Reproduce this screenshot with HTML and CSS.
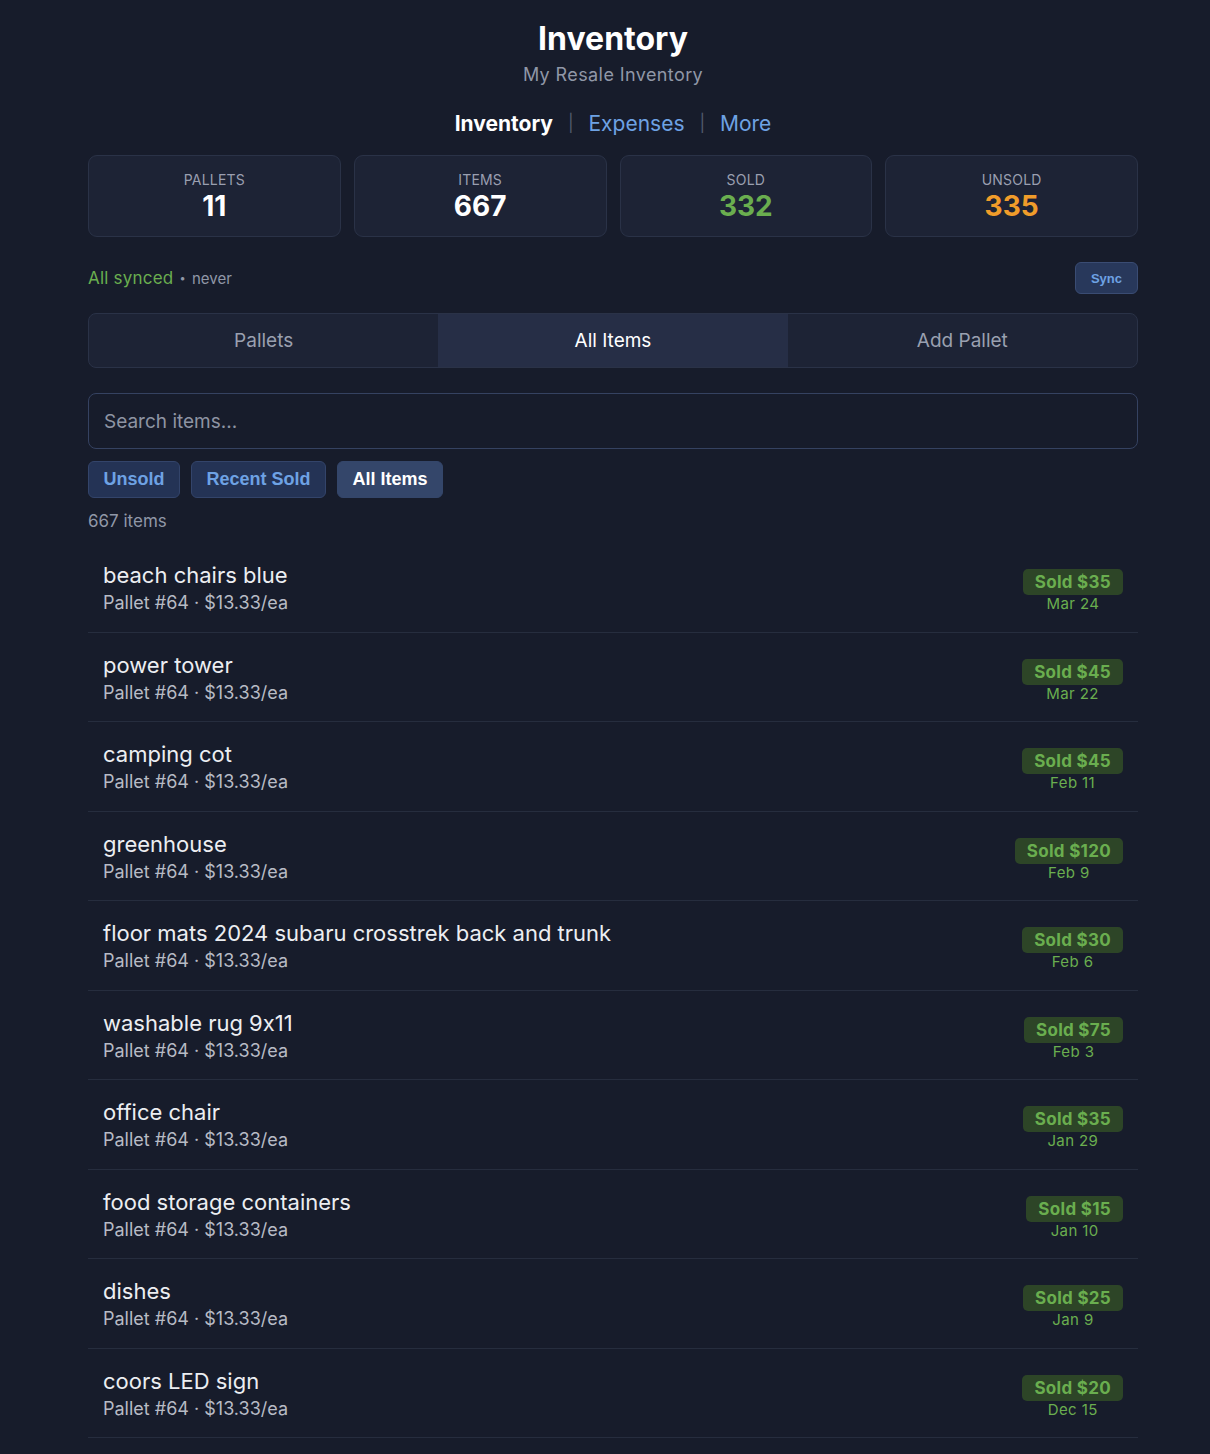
FILE: index.html
```html
<!DOCTYPE html>
<html lang="en">
<head>
    <meta charset="UTF-8">
    <meta name="viewport" content="width=device-width, initial-scale=1.0">
    <title>Inventory</title>
    <link rel="stylesheet" href="styles.css">
</head>
<body>
    <div class="app">
        <header class="header">
            <h1>Inventory</h1>
            <p class="subtitle">My Resale Inventory</p>
            <nav class="nav">
                <a class="active" href="#">Inventory</a>
                <span class="sep">|</span>
                <a href="#">Expenses</a>
                <span class="sep">|</span>
                <a href="#">More</a>
            </nav>
        </header>

        <section class="stats">
            <div class="stat">
                <div class="stat-label">Pallets</div>
                <div class="stat-value">11</div>
            </div>
            <div class="stat">
                <div class="stat-label">Items</div>
                <div class="stat-value">667</div>
            </div>
            <div class="stat">
                <div class="stat-label">Sold</div>
                <div class="stat-value sold">332</div>
            </div>
            <div class="stat">
                <div class="stat-label">Unsold</div>
                <div class="stat-value unsold">335</div>
            </div>
        </section>

        <div class="sync-row">
            <p class="sync-status"><span class="synced">All synced</span> <span class="dot">•</span> never</p>
            <button class="sync-btn">Sync</button>
        </div>

        <div class="tabs">
            <button class="tab">Pallets</button>
            <button class="tab active">All Items</button>
            <button class="tab">Add Pallet</button>
        </div>

        <input class="search" type="text" placeholder="Search items...">

        <div class="filters">
            <button class="chip">Unsold</button>
            <button class="chip">Recent Sold</button>
            <button class="chip active">All Items</button>
        </div>

        <p class="count" id="count">667 items</p>

        <div class="item-list" id="item-list"></div>
    </div>

    <script>
        const items = [
            { name: "beach chairs blue", price: 35, date: "Mar 24" },
            { name: "power tower", price: 45, date: "Mar 22" },
            { name: "camping cot", price: 45, date: "Feb 11" },
            { name: "greenhouse", price: 120, date: "Feb 9" },
            { name: "floor mats 2024 subaru crosstrek back and trunk", price: 30, date: "Feb 6" },
            { name: "washable rug 9x11", price: 75, date: "Feb 3" },
            { name: "office chair", price: 35, date: "Jan 29" },
            { name: "food storage containers", price: 15, date: "Jan 10" },
            { name: "dishes", price: 25, date: "Jan 9" },
            { name: "coors LED sign", price: 20, date: "Dec 15" },
        ];

        function renderItems() {
            const list = document.getElementById("item-list");
            list.innerHTML = "";
            items.forEach((item) => {
                const row = document.createElement("div");
                row.className = "item";
                row.innerHTML = `
                    <div class="item-info">
                        <div class="item-name">${item.name}</div>
                        <div class="item-meta">Pallet #64 · $13.33/ea</div>
                    </div>
                    <div class="item-status">
                        <span class="badge">Sold $${item.price}</span>
                        <span class="sold-date">${item.date}</span>
                    </div>
                `;
                list.appendChild(row);
            });
        }

        renderItems();
    </script>
</body>
</html>
```

FILE: styles.css
```css
body {
    margin: 0;
    padding: 0;
    background-color: #171c2b;
    color: #e6e8ee;
    font-family: Inter, "Noto Sans", sans-serif;
    font-feature-settings: "calt" 0;
}
.app {
    width: 1050px;
    margin-left: 88px;
    padding-top: 19px;
}
.header {
    text-align: center;
}
.header h1 {
    margin: 0;
    font-size: 32px;
    line-height: 40px;
    font-weight: 700;
    color: #fff;
}
.subtitle {
    margin: 4px 0 0;
    font-size: 18px;
    line-height: 24px;
    letter-spacing: 0.4px;
    color: #9097a7;
}
.nav {
    margin-top: 23px;
    font-size: 21px;
    line-height: 28px;
    height: 28px;
}
.nav a {
    color: #6ea2e4;
    text-decoration: none;
}
.nav a.active {
    color: #fff;
    font-weight: 700;
}
.nav .sep {
    color: #525a6d;
    font-size: 17px;
    line-height: 1;
    margin: 0 9px;
    vertical-align: 2px;
}
.stats {
    display: grid;
    grid-template-columns: repeat(4, 1fr);
    gap: 13px;
    margin-top: 17px;
}
.stat {
    background: #1d2335;
    border: 1px solid #2a3247;
    border-radius: 9px;
    padding: 15px 10px 14px;
    text-align: center;
}
.stat-label {
    font-size: 14px;
    line-height: 17px;
    text-transform: uppercase;
    letter-spacing: 0.2px;
    color: #9a9fb0;
}
.stat-value {
    margin-top: 2px;
    font-size: 28px;
    line-height: 32px;
    font-weight: 700;
    color: #fff;
}
.stat-value.sold {
    color: #6aae4f;
}
.stat-value.unsold {
    color: #f09c2a;
}
.sync-row {
    display: flex;
    justify-content: space-between;
    align-items: center;
    margin-top: 25px;
    height: 32px;
}
.sync-status {
    margin: 0;
    font-size: 15px;
    color: #9097a7;
}
.synced {
    color: #6aae4f;
    font-size: 17px;
    letter-spacing: 0.2px;
}
.dot {
    font-size: 11px;
    margin: 0 2px;
    vertical-align: 2px;
}
.sync-btn {
    height: 32px;
    padding: 0 15px;
    background: #28385b;
    border: 1px solid #3a4c73;
    border-radius: 6px;
    color: #6ea2e4;
    font-family: "Liberation Sans", Arial, sans-serif;
    font-weight: 700;
    font-size: 13px;
}
.tabs {
    display: flex;
    margin-top: 19px;
    border: 1px solid #2a3247;
    border-radius: 8px;
    overflow: hidden;
    background: #1d2335;
}
.tab {
    flex: 1;
    height: 53px;
    border: none;
    background: transparent;
    color: #9aa0b0;
    font-family: Inter, sans-serif;
    font-size: 19px;
}
.tab.active {
    background: #262e46;
    color: #fff;
}
.search {
    display: block;
    box-sizing: border-box;
    width: 100%;
    height: 56px;
    margin-top: 25px;
    padding: 0 15px;
    background: #171c2b;
    border: 1px solid #354261;
    border-radius: 8px;
    color: #e6e8ee;
    font-family: Inter, sans-serif;
    font-size: 19px;
}
.search::placeholder {
    color: #8e94a3;
}
.filters {
    display: flex;
    gap: 11px;
    margin-top: 12px;
}
.chip {
    height: 37px;
    padding: 0 14.5px;
    background: #243355;
    border: 1px solid #33446a;
    border-radius: 6px;
    color: #6ea2e4;
    font-family: "Liberation Sans", Arial, sans-serif;
    font-weight: 700;
    font-size: 18px;
}
.chip.active {
    background: #34466a;
    border-color: #34466a;
    color: #fff;
}
.count {
    margin: 12px 0 0;
    font-size: 17px;
    line-height: 22px;
    color: #9097a7;
}
.item-list {
    margin-top: 11px;
}
.item {
    display: flex;
    justify-content: space-between;
    align-items: center;
    padding: 18px 15px 16.5px;
    border-bottom: 1px solid #262d3e;
}
.item-name {
    font-size: 22px;
    line-height: 28px;
    color: #eceef2;
}
.item-meta {
    margin-top: 2px;
    font-size: 18px;
    line-height: 24px;
    color: #b7bbc5;
}
.item-status {
    display: flex;
    flex-direction: column;
    align-items: center;
    margin-top: 6px;
}
.badge {
    background: #2d4527;
    color: #6aae4f;
    font-weight: 700;
    font-size: 17px;
    line-height: 26px;
    letter-spacing: 0.3px;
    padding: 0 12px;
    border-radius: 5px;
}
.sold-date {
    font-size: 15px;
    line-height: 18px;
    letter-spacing: 0.4px;
    color: #6aae4f;
}
```
